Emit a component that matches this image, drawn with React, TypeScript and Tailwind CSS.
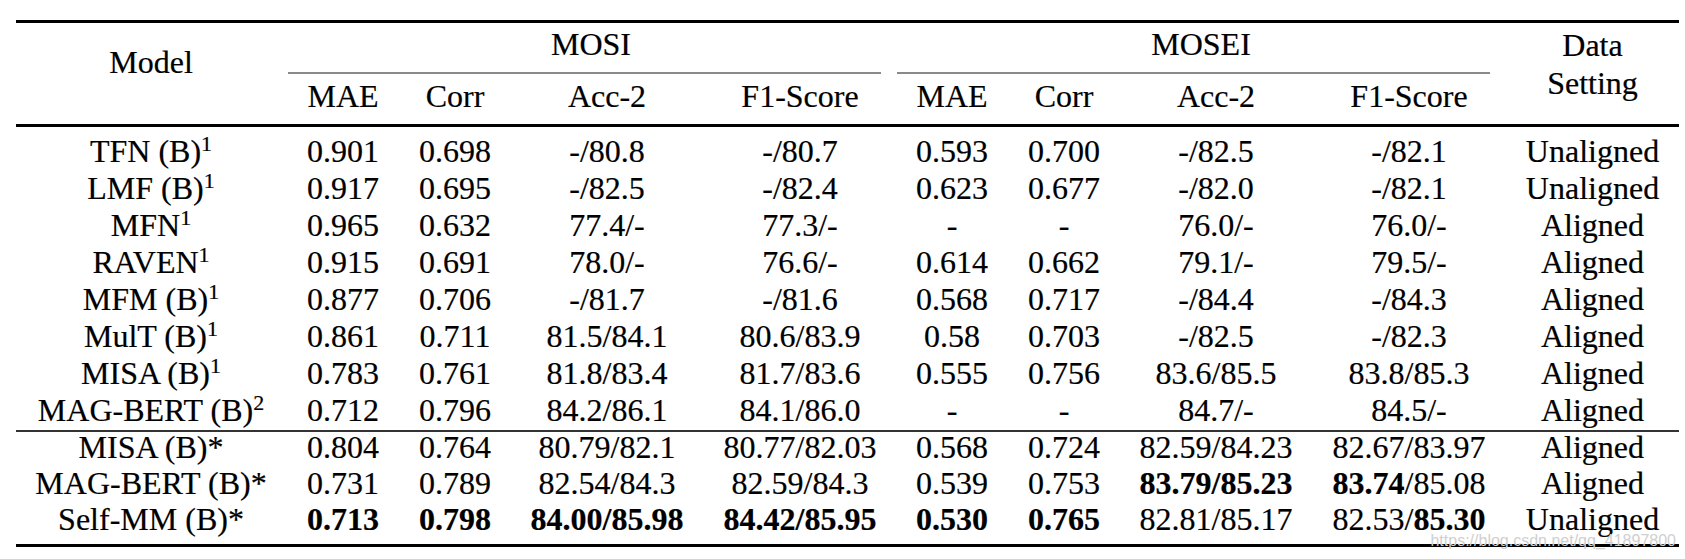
import React from "react";

const COLS =
  "grid grid-cols-[270px_114px_110px_194px_192px_112px_112px_192px_194px_173px]";

type Cell = React.ReactNode;

const group1: { name: string; sup: string; cells: Cell[] }[] = [
  { name: "TFN (B)", sup: "1", cells: ["0.901", "0.698", "-/80.8", "-/80.7", "0.593", "0.700", "-/82.5", "-/82.1", "Unaligned"] },
  { name: "LMF (B)", sup: "1", cells: ["0.917", "0.695", "-/82.5", "-/82.4", "0.623", "0.677", "-/82.0", "-/82.1", "Unaligned"] },
  { name: "MFN", sup: "1", cells: ["0.965", "0.632", "77.4/-", "77.3/-", "-", "-", "76.0/-", "76.0/-", "Aligned"] },
  { name: "RAVEN", sup: "1", cells: ["0.915", "0.691", "78.0/-", "76.6/-", "0.614", "0.662", "79.1/-", "79.5/-", "Aligned"] },
  { name: "MFM (B)", sup: "1", cells: ["0.877", "0.706", "-/81.7", "-/81.6", "0.568", "0.717", "-/84.4", "-/84.3", "Aligned"] },
  { name: "MulT (B)", sup: "1", cells: ["0.861", "0.711", "81.5/84.1", "80.6/83.9", "0.58", "0.703", "-/82.5", "-/82.3", "Aligned"] },
  { name: "MISA (B)", sup: "1", cells: ["0.783", "0.761", "81.8/83.4", "81.7/83.6", "0.555", "0.756", "83.6/85.5", "83.8/85.3", "Aligned"] },
  { name: "MAG-BERT (B)", sup: "2", cells: ["0.712", "0.796", "84.2/86.1", "84.1/86.0", "-", "-", "84.7/-", "84.5/-", "Aligned"] },
];

const B = ({ children }: { children: React.ReactNode }) => (
  <span className="font-bold">{children}</span>
);

const group2: { name: string; cells: Cell[] }[] = [
  { name: "MISA (B)*", cells: ["0.804", "0.764", "80.79/82.1", "80.77/82.03", "0.568", "0.724", "82.59/84.23", "82.67/83.97", "Aligned"] },
  {
    name: "MAG-BERT (B)*",
    cells: [
      "0.731", "0.789", "82.54/84.3", "82.59/84.3", "0.539", "0.753",
      <B>83.79/85.23</B>,
      <>
        <B>83.74</B>/85.08
      </>,
      "Aligned",
    ],
  },
  {
    name: "Self-MM (B)*",
    cells: [
      <B>0.713</B>, <B>0.798</B>, <B>84.00/85.98</B>, <B>84.42/85.95</B>, <B>0.530</B>, <B>0.765</B>,
      "82.81/85.17",
      <>
        82.53/<B>85.30</B>
      </>,
      "Unaligned",
    ],
  },
];

function Row({ name, cells, h }: { name: React.ReactNode; cells: Cell[]; h: string }) {
  return (
    <div className={`${COLS} ${h} items-center text-center whitespace-nowrap`}>
      <div>{name}</div>
      {cells.map((c, i) => (
        <div key={i}>{c}</div>
      ))}
    </div>
  );
}

export default function App() {
  return (
    <div className="relative w-[1685px] h-[559px] bg-white text-black text-[32px] overflow-hidden font-['Liberation_Serif','Times_New_Roman',serif] [-webkit-text-stroke:0.2px_#000]">
      <div className="ml-[16px] w-[1663px] pt-[20px]">
        {/* top rule */}
        <div className="h-[3px] bg-black" />
        {/* header */}
        <div className={`${COLS} grid-rows-[49px_2px_50px] text-center whitespace-nowrap`}>
          <div className="row-span-3 col-start-1 row-start-1 pt-[21px] leading-[37px]">Model</div>
          <div className="col-start-2 col-span-4 row-start-1 pt-[3px] leading-[37px]">MOSI</div>
          <div className="col-start-6 col-span-4 row-start-1 pt-[3px] leading-[37px]">MOSEI</div>
          <div className="col-start-10 row-start-1 row-span-3 pt-[3px] leading-[38px]">
            Data
            <br />
            Setting
          </div>
          <div className="col-start-2 col-span-4 row-start-2 ml-[2px] mr-[15px] bg-[#8a8a8a]" />
          <div className="col-start-6 col-span-4 row-start-2 ml-[1px] mr-[16px] bg-[#8a8a8a]" />
          <div className="col-start-2 row-start-3 pt-[4px] leading-[37px]">MAE</div>
          <div className="col-start-3 row-start-3 pt-[4px] leading-[37px]">Corr</div>
          <div className="col-start-4 row-start-3 pt-[4px] leading-[37px]">Acc-2</div>
          <div className="col-start-5 row-start-3 pt-[4px] leading-[37px]">F1-Score</div>
          <div className="col-start-6 row-start-3 pt-[4px] leading-[37px]">MAE</div>
          <div className="col-start-7 row-start-3 pt-[4px] leading-[37px]">Corr</div>
          <div className="col-start-8 row-start-3 pt-[4px] leading-[37px]">Acc-2</div>
          <div className="col-start-9 row-start-3 pt-[4px] leading-[37px]">F1-Score</div>
        </div>
        {/* header rule */}
        <div className="h-[3px] bg-black" />
        {/* group 1 */}
        <div className="pt-[6px] leading-[37px]">
          {group1.map((r, i) => (
            <Row
              key={i}
              h="h-[37px]"
              name={
                <>
                  {r.name}
                  <sup className="text-[22px]">{r.sup}</sup>
                </>
              }
              cells={r.cells}
            />
          ))}
        </div>
        {/* mid rule */}
        <div className="mt-[1px] h-[2px] bg-[#333]" />
        {/* group 2 */}
        <div className="-mt-[3px] leading-[36px]">
          {group2.map((r, i) => (
            <Row key={i} h="h-[36px]" name={r.name} cells={r.cells} />
          ))}
        </div>
        {/* bottom rule */}
        <div className="mt-[7px] h-[3px] bg-black" />
      </div>
      {/* watermark */}
      <div className="absolute right-[9px] top-[533px] text-[16px] leading-[16px] text-[#cfcfcf] whitespace-nowrap font-['Liberation_Sans',Arial,sans-serif] [-webkit-text-stroke:0px_transparent]">
        https://blog.csdn.net/qq_41897800
      </div>
    </div>
  );
}
